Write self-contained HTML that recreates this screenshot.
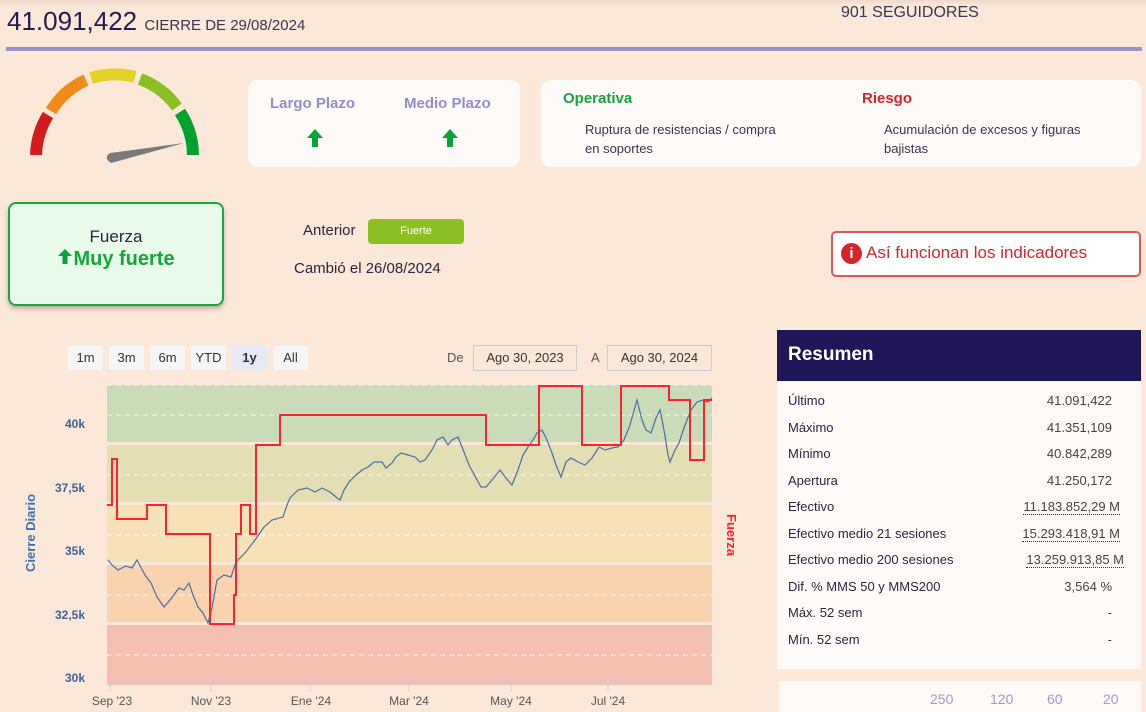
<!DOCTYPE html>
<html><head><meta charset="utf-8"><style>
*{margin:0;padding:0;box-sizing:border-box}
body{width:1146px;height:712px;overflow:hidden;background:#fce8d8;font-family:"Liberation Sans",sans-serif;position:relative;color:#2a2540}
.a{position:absolute}
.card{position:absolute;background:#fefaf7;border-radius:10px}
.btn{position:absolute;top:346px;height:24px;background:#f6f5f5;border-radius:2px;font-size:13px;color:#333;text-align:center;line-height:24px}
.row{position:absolute;left:788px;font-size:13px;color:#2a2540}
.val{position:absolute;right:34px;font-size:13px;color:#444}
.ul{border-bottom:1px dotted #333}
</style></head><body>
<div class="a" style="left:0;top:0;width:1146px;height:6px;background:linear-gradient(#eed9cb,#fce8d8)"></div>
<div class="a" style="left:7px;top:6px;font-size:26px;color:#221d50">41.091,422 <span style="font-size:15px;color:#3a3550">CIERRE DE 29/08/2024</span></div>
<div class="a" style="left:841px;top:4px;font-size:16px;color:#3a3550">901 SEGUIDORES</div>
<div class="a" style="left:6px;top:47px;width:1136px;height:4px;background:#9b92cc"></div>

<svg class="a" style="left:0;top:60px" width="240" height="110">
<g fill="none" stroke-width="12">
<path d="M36 95 A80 80 0 0 1 48 55" stroke="#d01c1c"/>
<path d="M51 51 A80 80 0 0 1 86 20" stroke="#f08a18"/>
<path d="M91 18 A80 80 0 0 1 135 17" stroke="#e4d22a"/>
<path d="M140 19 A80 80 0 0 1 177 47" stroke="#8bbf24"/>
<path d="M180 52 A80 80 0 0 1 193 95" stroke="#04a12d"/>
</g>
<path d="M110 93 L184 83 L111 103 Q103 98 110 93Z" fill="#7a7a7a"/>
</svg>

<div class="card" style="left:248px;top:80px;width:272px;height:87px"></div>
<div class="a" style="left:270px;top:95px;font-size:15px;font-weight:bold;color:#948cd0">Largo Plazo</div>
<div class="a" style="left:404px;top:95px;font-size:15px;font-weight:bold;color:#948cd0">Medio Plazo</div>
<svg class="a" style="left:306px;top:128px" width="18" height="20"><path d="M9 1 L17 10 H12 V19 H6 V10 H1Z" fill="#08a23a"/></svg>
<svg class="a" style="left:441px;top:128px" width="18" height="20"><path d="M9 1 L17 10 H12 V19 H6 V10 H1Z" fill="#08a23a"/></svg>

<div class="card" style="left:541px;top:80px;width:600px;height:87px"></div>
<div class="a" style="left:563px;top:90px;font-size:15px;font-weight:bold;color:#16a53b">Operativa</div>
<div class="a" style="left:862px;top:90px;font-size:15px;font-weight:bold;color:#d4252a">Riesgo</div>
<div class="a" style="left:585px;top:120px;font-size:13px;line-height:19px;color:#3a3550;width:260px">Ruptura de resistencias / compra<br>en soportes</div>
<div class="a" style="left:884px;top:120px;font-size:13px;line-height:19px;color:#3a3550;width:235px">Acumulación de excesos y figuras bajistas</div>

<div class="a" style="left:8px;top:202px;width:216px;height:104px;background:#e8fbea;border:2px solid #1da33f;border-radius:8px;box-shadow:0 3px 5px rgba(0,0,0,.25);text-align:center">
<div style="margin-top:23px;font-size:17px;color:#2a2540">Fuerza</div>
<div style="font-size:20px;font-weight:bold;color:#16a53b;margin-top:1px"><svg width="16" height="17" style="vertical-align:0"><path d="M8 1 L15 8 H10.5 V16 H5.5 V8 H1Z" fill="#08a23a"/></svg>Muy fuerte</div></div>

<div class="a" style="left:303px;top:222px;font-size:15px;color:#2a2540">Anterior</div>
<div class="a" style="left:368px;top:219px;width:96px;height:25px;background:#8cbf23;border-radius:4px;color:#fff;font-size:11px;text-align:center;line-height:25px">Fuerte</div>
<div class="a" style="left:294px;top:260px;font-size:15px;color:#2a2540">Cambió el 26/08/2024</div>

<div class="a" style="left:831px;top:231px;width:310px;height:46px;background:#fff;border:2px solid #e05555;border-radius:5px"></div>
<div class="a" style="left:841px;top:243px;width:21px;height:21px;border-radius:50%;background:#d4252a;color:#fff;font-weight:bold;font-size:15px;text-align:center;line-height:21px">i</div>
<div class="a" style="left:866px;top:243px;font-size:17px;color:#d4252a">Así funcionan los indicadores</div>

<div class="btn" style="left:68px;width:35px">1m</div>
<div class="btn" style="left:109px;width:35px">3m</div>
<div class="btn" style="left:150px;width:35px">6m</div>
<div class="btn" style="left:191px;width:35px">YTD</div>
<div class="btn" style="left:232px;width:35px;background:#e6e9f5;font-weight:bold">1y</div>
<div class="btn" style="left:273px;width:35px">All</div>
<div class="a" style="left:447px;top:350px;font-size:13px;color:#555">De</div>
<div class="a" style="left:473px;top:345px;width:104px;height:26px;border:1px solid #ccc;font-size:13px;color:#333;text-align:center;line-height:24px">Ago 30, 2023</div>
<div class="a" style="left:591px;top:350px;font-size:13px;color:#555">A</div>
<div class="a" style="left:607px;top:345px;width:105px;height:26px;border:1px solid #ccc;font-size:13px;color:#333;text-align:center;line-height:24px">Ago 30, 2024</div>

<svg class="a" style="left:0;top:380px" width="760" height="332">
<g transform="translate(0,-380)">
<rect x="107" y="385" width="605" height="57" fill="#c9dbb7"/>
<rect x="107" y="445" width="605" height="57" fill="#e4dfb3"/>
<rect x="107" y="505" width="605" height="57" fill="#f7e2b8"/>
<rect x="107" y="565" width="605" height="57" fill="#f9d3ad"/>
<rect x="107" y="625" width="605" height="60" fill="#f2bfb0"/>
<g stroke="#fff" stroke-dasharray="5,4" stroke-width="1" opacity=".8">
<line x1="107" x2="712" y1="415" y2="415"/><line x1="107" x2="712" y1="475" y2="475"/>
<line x1="107" x2="712" y1="535" y2="535"/><line x1="107" x2="712" y1="595" y2="595"/>
<line x1="107" x2="712" y1="655" y2="655"/><line x1="107" x2="712" y1="385" y2="385"/></g>
<line x1="107" x2="712" y1="685" y2="685" stroke="#ccd6eb"/>
<g stroke="#ccd6eb"><line x1="110" x2="110" y1="685" y2="692"/><line x1="211" x2="211" y1="685" y2="692"/><line x1="310" x2="310" y1="685" y2="692"/><line x1="409" x2="409" y1="685" y2="692"/><line x1="511" x2="511" y1="685" y2="692"/><line x1="608" x2="608" y1="685" y2="692"/></g>
<polyline fill="none" stroke="#4a6fa5" stroke-width="1.2" points="108,560 112,565 118,570 126,566 132,568 137,560 145,575 151,583 157,597 164,607 170,600 179,588 184,590 189,583 193,595 198,607 203,613 208,623 212,608 217,580 224,575 231,577 236,562 245,553 255,540 264,527 272,520 283,517 287,505 290,498 298,490 307,488 315,492 322,488 330,492 336,497 340,500 344,490 349,482 356,475 362,470 368,467 374,462 382,462 386,468 392,463 396,457 401,453 408,455 415,457 420,462 425,460 432,450 437,440 443,437 448,445 452,440 458,437 464,452 469,465 476,478 481,487 486,487 492,480 500,470 506,478 512,485 518,470 523,455 528,447 533,440 537,433 542,430 547,440 552,453 556,465 561,477 566,462 571,458 578,462 585,465 592,458 599,447 605,450 612,448 618,447 624,440 630,425 637,400 642,420 646,430 651,433 656,418 660,410 664,430 668,455 670,462 675,450 679,443 685,425 691,410 697,402 703,400 708,402 712,398"/>
<polyline fill="none" stroke="#ff1f2e" stroke-width="2" points="107,505 112,505 112,459 117,459 117,519 147,519 147,505 166,505 166,534 210,534 210,624 234,624 234,595 236,595 236,534 241,534 241,505 250,505 250,534 256,534 256,445 280,445 280,415 486,415 486,445 539,445 539,386 582,386 582,445 621,445 621,386 669,386 669,400 690,400 690,460 704,460 704,400 712,400"/>
<g font-size="12" fill="#3f5f9a" text-anchor="end" font-weight="bold"><text x="85" y="428">40k</text><text x="85" y="492">37,5k</text><text x="85" y="555">35k</text><text x="85" y="619">32,5k</text><text x="85" y="682">30k</text></g>
<g font-size="12" fill="#555" text-anchor="middle"><text x="112" y="705">Sep '23</text><text x="211" y="705">Nov '23</text><text x="311" y="705">Ene '24</text><text x="409" y="705">Mar '24</text><text x="511" y="705">May '24</text><text x="608" y="705">Jul '24</text></g>
<text transform="translate(35,533) rotate(-90)" text-anchor="middle" font-size="13" font-weight="bold" fill="#3f6fb5">Cierre Diario</text>
<text transform="translate(727,535) rotate(90)" text-anchor="middle" font-size="13" font-weight="bold" fill="#ff1f2e">Fuerza</text>
</g></svg>

<div class="a" style="left:777px;top:330px;width:364px;height:339px;background:#fefaf7"></div>
<div class="a" style="left:777px;top:330px;width:364px;height:51px;background:#1e1657;color:#fff;font-size:19px;font-weight:bold;padding:14px 0 0 11px">Resumen</div>
<div class="row" style="top:393px">Último</div><div class="val" style="top:393px">41.091,422</div>
<div class="row" style="top:420px">Máximo</div><div class="val" style="top:420px">41.351,109</div>
<div class="row" style="top:446px">Mínimo</div><div class="val" style="top:446px">40.842,289</div>
<div class="row" style="top:473px">Apertura</div><div class="val" style="top:473px">41.250,172</div>
<div class="row" style="top:499px">Efectivo</div><div class="val ul" style="top:499px;right:26px">11.183.852,29 M</div>
<div class="row" style="top:526px">Efectivo medio 21 sesiones</div><div class="val ul" style="top:526px;right:26px">15.293.418,91 M</div>
<div class="row" style="top:552px">Efectivo medio 200 sesiones</div><div class="val ul" style="top:552px;right:22px">13.259.913,85 M</div>
<div class="row" style="top:579px">Dif. % MMS 50 y MMS200</div><div class="val" style="top:579px">3,564 %</div>
<div class="row" style="top:605px">Máx. 52 sem</div><div class="val" style="top:605px">-</div>
<div class="row" style="top:632px">Mín. 52 sem</div><div class="val" style="top:632px">-</div>

<div class="a" style="left:779px;top:681px;width:362px;height:31px;background:#fefaf7"></div>
<div class="a" style="left:930px;top:691px;font-size:14px;color:#a09ac8">250</div>
<div class="a" style="left:990px;top:691px;font-size:14px;color:#a09ac8">120</div>
<div class="a" style="left:1047px;top:691px;font-size:14px;color:#a09ac8">60</div>
<div class="a" style="left:1103px;top:691px;font-size:14px;color:#a09ac8">20</div>
</body></html>
